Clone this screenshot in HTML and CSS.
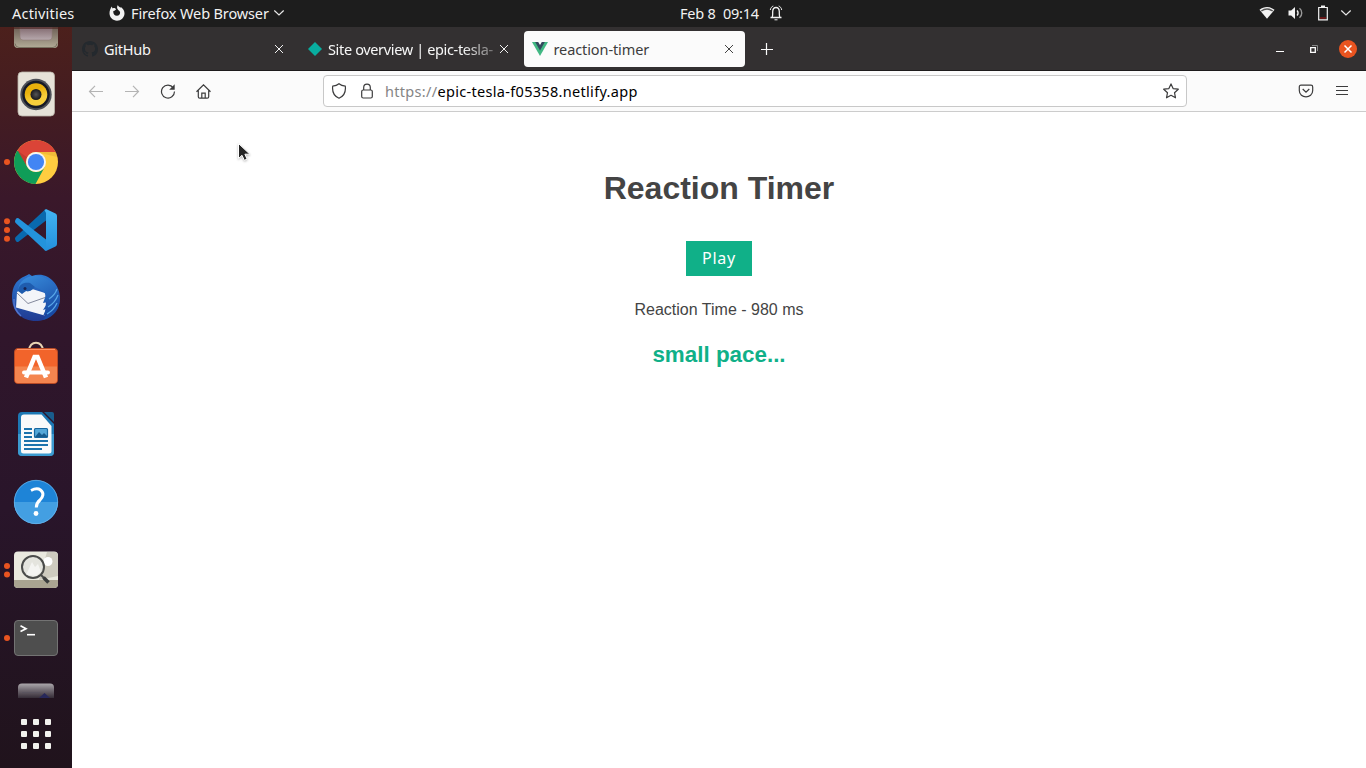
FILE: index.html
```html
<!DOCTYPE html>
<html lang="en">
<head>
<meta charset="utf-8">
<title>reaction-timer</title>
<link rel="stylesheet" href="styles.css">
</head>
<body>
<header class="topbar">
  <div class="topbar-left">
    <span class="t t-activities">Activities</span>
    <svg class="ff" width="16" height="16" viewBox="0 0 16 16"><path d="M2.6 1.6 3.7 3.6C4.4 2.9 5.3 3 6 3.2L7.2 4.3 5.5 5.8 4.3 6C4 9 5.5 10.8 8 10.8c2 0 3.2-1.6 3.1-3.2C11 6.2 10 5.4 9.2 4.9 7.7 3.7 7.8 1.5 8.9.1c.4 1.5 1.4 1.8 2.5 2.700l.5-.8c2.400 1.700 3.700 4 3.600 6.500C15.400 12.600 12 15.700 8 15.700S.5 12.500.5 8.300C.5 5.500 1.700 3.500 2.600 1.600z" fill="#f2f2f2"/></svg>
    <span class="t t-app">Firefox Web Browser</span>
    <svg class="chev" width="12" height="8" viewBox="0 0 12 8"><path d="M1.300 1.500 6 6l4.700-4.500" fill="none" stroke="#e8e8e8" stroke-width="1.200"/></svg>
  </div>
  <div class="topbar-clock">
    <span class="t t-date">Feb 8</span><span class="t t-time">09:14</span>
    <svg width="14" height="16" viewBox="0 0 14 16" fill="none" stroke="#f2f2f2"><path d="M1.500 12.500h11M3 12.500C4 11 3.600 9 3.700 6.500 3.800 4 5 2.500 7 2.500S10.200 4 10.300 6.500C10.400 9 10 11 11 12.500" stroke-width="1.300"/><path d="M5.500 14.800h3M4.300 1C2.800 1.500 1.500 3 1.300 5M9.700 1c1.500.5 2.800 2 3 4"/></svg>
  </div>
  <div class="topbar-status">
    <svg width="16" height="14" viewBox="0 0 16 14"><path d="M.5 3.800C5 .2 11 .2 15.500 3.800L8 12.800z" fill="#f2f2f2"/><path d="M2.300 5C5.700 2.700 10.300 2.700 13.700 5" fill="none" stroke="#555" stroke-width="1.500"/></svg>
    <svg width="16" height="14" viewBox="0 0 16 14"><path d="M.5 4.500h2.700L7 1v12L3.200 9.500H.5z" fill="#f2f2f2"/><path d="M9 4.500c1.400 1.300 1.400 3.700 0 5" fill="none" stroke="#f2f2f2" stroke-width="1.400"/><path d="M11.500 2.300c3 2.400 3 7 0 9.400" fill="none" stroke="#999" stroke-width="1.400"/></svg>
    <svg class="battery" width="12" height="16" viewBox="0 0 12 16"><path d="M1.700 2.500h8.600v12.300H1.700z" fill="none" stroke="#f2f2f2" stroke-width="1.200"/><path d="M4 .5h4v2H4z" fill="#f2f2f2"/><path d="M3 13h6" stroke="#b01010" stroke-width="1"/></svg>
    <svg width="12" height="8" viewBox="0 0 12 8"><path d="M1.300 1.500 6 6l4.700-4.500" fill="none" stroke="#e8e8e8" stroke-width="1.200"/></svg>
  </div>
</header>
<div class="desktop">
  <nav class="dock">
    <div class="dock-items">
      <svg viewBox="0 0 72 68" class="first"><defs>
        <linearGradient id="g1" x2="0" y2="1"><stop offset=".5" stop-color="#685950"/><stop offset="1" stop-color="#b3ad98"/></linearGradient>
        <linearGradient id="g2" x2="0" y2="1"><stop offset=".4" stop-color="#6b4f55"/><stop offset="1" stop-color="#b7a9ad"/></linearGradient></defs>
        <rect x="14" y="12" width="44" height="44" rx="4" fill="url(#g1)"/><path d="M15 51.500q.5 4 4 4h34q3.500 0 4-4" fill="none" stroke="#77705f"/><rect x="20" y="18" width="32" height="30" rx="3" fill="url(#g2)" stroke="#8d7a76" stroke-width=".6"/><path d="M14 34h44v3H14z" fill="#4a1f1c" opacity=".6"/></svg>
      <svg viewBox="0 0 72 68"><defs><linearGradient id="g3" x1=".3" x2=".7" y2="1"><stop offset=".3" stop-color="#e9b10c"/><stop offset=".7" stop-color="#f7cf3c"/></linearGradient><radialGradient id="g4"><stop offset="0" stop-color="#555"/><stop offset="1" stop-color="#18191d"/></radialGradient></defs>
        <rect x="18" y="12" width="36.500" height="44" rx="4" fill="#e6e2d8" stroke="#b9b4a8" stroke-width=".8"/><circle cx="36" cy="34.500" r="15.700" fill="#4e5057"/><circle cx="36" cy="34.500" r="13.700" fill="#171a26"/><circle cx="36" cy="34.500" r="11.300" fill="url(#g3)"/><circle cx="36" cy="34.500" r="5.500" fill="url(#g4)"/></svg>
      <svg viewBox="0 0 72 68"><circle class="dot" cx="7" cy="34" r="3"/>
        <circle cx="36" cy="34" r="22" fill="#ffcd40"/><path d="M17 23A22 22 0 0 1 55.700 24H36A10 10 0 0 0 27.300 39z" fill="#db4437"/><path d="M17 23A22 22 0 0 0 35.500 56L44.700 39A10 10 0 0 1 27.300 39L18 23z" fill="#0f9d58"/><path d="M36 24h19.700q1 2 1.500 5z" fill="#c98a22" opacity=".25"/><path d="M18 23 27 39l1-9z" fill="#7a241c" opacity=".25"/><circle cx="36" cy="34" r="10" fill="#f5f5f5"/><circle cx="36" cy="34" r="8.100" fill="#4285f4"/></svg>
      <svg viewBox="0 0 72 68"><defs><linearGradient id="g5" x2="0" y2="1"><stop offset="0" stop-color="#42b4f3"/><stop offset="1" stop-color="#2490dc"/></linearGradient></defs><circle class="dot" cx="7" cy="25.300" r="3"/><circle class="dot" cx="7" cy="34" r="3"/><circle class="dot" cx="7" cy="42.700" r="3"/>
        <path d="M15 42.500q0-.8.700-1.400L44 14.500q1-1.500 3.500-.5L46 24.500 18.500 45.800q-1 .6-2 0L15.300 44z" fill="#0969ae"/><path d="M15 25.500q0 .8.700 1.400L44 53.500q1 1.500 3.500.5L46 43.500 18.500 22.200q-1-.6-2 0L15.300 24z" fill="#2393dc"/><path d="M44.500 54c1 .9 1.700 1 2.500.6l8.500-4q1.500-.8 1.500-2.500V20q0-1.700-1.500-2.500l-8.500-4c-.8-.4-1.500-.3-2.500.5L46 17v34z" fill="url(#g5)"/></svg>
      <svg viewBox="0 0 72 68"><defs><linearGradient id="g6" x2="0" y2="1"><stop offset="0" stop-color="#2c78d2"/><stop offset="1" stop-color="#203a91"/></linearGradient><linearGradient id="g6b" x2=".5" y2="1"><stop offset="0" stop-color="#3a8fde"/><stop offset="1" stop-color="#184ba5"/></linearGradient></defs>
        <path d="M12 34C12 26 14 19 20 15c4-3 6-3 9-5l3 2C47 7 59 19 60 33c.5 13-10 23-22 24C23 58 12 48 12 34z" fill="url(#g6)"/>
        <path d="M14 35q-1 10 7 17" fill="none" stroke="#5175ce" stroke-width="1.500"/>
        <path d="M17 28q5-4 12-4l16 5q2 9-.5 22.500L16 43.500z" fill="#f3f5f9"/><path d="M17 29 28 39.500 45 33.500" fill="none" stroke="#777d91" stroke-width=".9"/>
        <path d="M18 27C18 14 34 8 45 14c12 6 18 20 13 30-3 6-8 10-15 12l5-7-5 3 3-7-3 1 5-8-5 1 3-8C43 26 39 25 35 23q-4 5-9 4l-4 1z" fill="url(#g6b)"/>
        <path d="M18 27c1-7 6-9 12-8l5 4q-4 5-9 4l-4 3z" fill="#1f5cae"/><circle cx="25" cy="24.500" r="1.500" fill="#172455"/>
        <path d="M49 35q6-4 8-10M48 43q7-4 10-12M47 50q7-4 10-11" fill="none" stroke="#59a7e8" stroke-width="1.200"/></svg>
      <svg viewBox="0 0 72 68"><path d="M29 19C29 8 43 8 43 19" fill="none" stroke="#e9d5b4" stroke-width="2"/><rect x="14.500" y="16.500" width="43" height="35" rx="3.500" fill="#f2642b" stroke="#b84a25"/><path d="M15 34.500h42V48q0 3-3 3H18q-3 0-3-3z" fill="#f4854f"/><path d="M17 17.500h38" stroke="#ff9466"/><g fill="none" stroke="#fff" stroke-width="4.500"><path d="m26 45.500 8.500-20.500h3L46 45.500"/><path d="M24 40.500h24" stroke-linecap="round" stroke-width="4"/></g></svg>
      <svg viewBox="0 0 72 68"><path d="M22 12h20l12 12v28q0 4-4 4H22q-4 0-4-4V16q0-4 4-4z" fill="#1d78b4"/><path d="M18 34h36v18q0 4-4 4H22q-4 0-4-4z" fill="#3c9bd0"/><path d="M44 12h8q2 0 2 2v8z" fill="#195d8d"/><path d="M24 14.500h17.500L51.500 26v25q0 2.500-2.500 2.500H23.500q-2.500 0-2.500-2.500V17.500q0-3 3-3z" fill="#fafafa"/><g stroke="#1d73ac" stroke-width="2"><path d="M24 29h8M24 33h8M24 37h8M24 41h24M24 45h24M24 49h18"/></g><rect x="34.500" y="28.500" width="13" height="9" rx="1" fill="#54a7d8" stroke="#1767a0" stroke-width="1.200"/><path d="m35 37 4-5 3 3 2-2 4 4z" fill="#165b8e"/></svg>
      <svg viewBox="0 0 72 68"><circle cx="36" cy="34" r="22" fill="#1e84d7"/><path d="M14 34a22 22 0 0 0 44 0z" fill="#439fe2"/><circle cx="36" cy="34" r="21.700" fill="none" stroke="#71b9ec" stroke-width=".7"/><path d="M31 22.500q6-3 9.500-.5c4 3 2.500 7-.5 10-3 2.500-3.700 4-3.700 7.500" fill="none" stroke="#fff" stroke-width="3"/><circle cx="36" cy="45.500" r="2.400" fill="#fff"/></svg>
      <svg viewBox="0 0 72 68"><circle class="dot" cx="7" cy="30" r="3"/><circle class="dot" cx="7" cy="38.500" r="3"/><rect x="14" y="15.500" width="44" height="36.500" rx="4" fill="#eae9df"/><path d="M47 16h7q4 0 4 4v20L39 44z" fill="#cecbbf"/><path d="M14 44h44v4q0 4-4 4H18q-4 0-4-4z" fill="#aaa491"/><circle cx="48" cy="25.500" r="4.500" fill="#fff"/><circle cx="33" cy="31" r="11" fill="#e3e3de" fill-opacity=".9" stroke="#4b4c4b" stroke-width="2"/><path d="m26 39 6-13 3 5 3-3 3 8-5 4z" fill="#fff" opacity=".6"/><path d="m41 39 3 3" stroke="#4b4c4b" stroke-width="2"/><path d="m43.500 41.500 5 5" stroke="#3b3d3d" stroke-width="3.500"/></svg>
      <svg viewBox="0 0 72 68"><circle class="dot" cx="7" cy="34" r="3"/><rect x="14.500" y="16.500" width="43" height="35" rx="3.500" fill="#4e4e4e" stroke="#737373"/><path d="m20.500 21.800 5.500 2.900-5.500 2.900" fill="none" stroke="#fff" stroke-width="1.700"/><path d="M27 30.700h8" stroke="#fff" stroke-width="1.600"/></svg>
      <svg viewBox="0 0 72 68"><defs><linearGradient id="g7" gradientUnits="userSpaceOnUse" x1="0" x2="0" y1="11" y2="27"><stop offset="0" stop-color="#b0acb0"/><stop offset=".4" stop-color="#777078"/><stop offset="1" stop-color="#2e2530"/></linearGradient></defs><rect x="18" y="11.500" width="36" height="44" rx="4" fill="url(#g7)"/><path d="m39 26 5.500-5 5.500 5z" fill="#28285a"/><path d="M22 20.500h18" stroke="#5b5560"/></svg>
    </div>
    <div class="apps-grid"><i></i><i></i><i></i><i></i><i></i><i></i><i></i><i></i><i></i></div>
  </nav>
  <section class="browser">
    <div class="tabs">
      <div class="tab">
        <svg class="fav" width="16" height="16" viewBox="0 0 16 16"><path fill="#24292e" d="M8 0C3.580 0 0 3.580 0 8c0 3.540 2.290 6.530 5.470 7.590.4.070.55-.17.55-.38 0-.19-.01-.82-.01-1.490-2.010.37-2.530-.49-2.690-.94-.09-.23-.48-.94-.82-1.130-.28-.15-.68-.52-.01-.53.63-.01 1.080.58 1.230.82.720 1.210 1.870.87 2.330.66.070-.52.280-.87.510-1.070-1.780-.2-3.640-.89-3.640-3.950 0-.87.310-1.590.82-2.150-.08-.2-.36-1.020.08-2.120 0 0 .67-.21 2.200.82a7.600 7.600 0 0 1 4 0c1.530-1.040 2.200-.82 2.200-.82.440 1.100.160 1.920.080 2.120.510.560.820 1.270.820 2.150 0 3.070-1.870 3.750-3.650 3.950.290.250.540.730.540 1.480 0 1.070-.01 1.930-.01 2.200 0 .210.150.460.550.380A8 8 0 0 0 16 8c0-4.420-3.580-8-8-8z"/></svg>
        <span class="label"><span class="t t-github">GitHub</span></span>
        <svg class="x" width="10" height="10" viewBox="0 0 10 10"><path d="m1 1 8 8m0-8-8 8"/></svg>
      </div>
      <div class="tab">
        <svg class="fav" width="16" height="16" viewBox="0 0 16 16"><path fill="#08ad9f" d="m8 1 7 7-7 7-7-7z"/></svg>
        <span class="label fade"><span class="t t-site">Site overview | epic-tesla-</span></span>
        <svg class="x" width="10" height="10" viewBox="0 0 10 10"><path d="m1 1 8 8m0-8-8 8"/></svg>
      </div>
      <div class="tab active">
        <svg class="fav" width="16" height="16" viewBox="0 0 16 16"><path fill="#41b883" d="M0 1h16L8 15z"/><path fill="#34495e" d="M3.200 1h9.600L8 9.500z"/><path fill="#fbfbfb" d="M6.200 1h3.600L8 4z"/></svg>
        <span class="label"><span class="t t-react">reaction-timer</span></span>
        <svg class="x" width="10" height="10" viewBox="0 0 10 10"><path d="m1 1 8 8m0-8-8 8"/></svg>
      </div>
      <svg class="plus" width="12" height="12" viewBox="0 0 12 12"><path d="M5.500 0v12M0 6.500h12" stroke="#fbfbfb" stroke-width="1.200"/></svg>
      <div class="window-buttons">
        <svg width="10" height="10" viewBox="0 0 10 10"><path d="M1 7.500h8" stroke="#fff"/></svg>
        <svg width="10" height="10" viewBox="0 0 10 10" fill="none"><path d="M1.700 3.700h4.600v4.600H1.700z" stroke="#fff" stroke-width="1.300"/><path d="M3 1.500h5.500V7" stroke="#888"/></svg>
        <svg width="18" height="18" viewBox="0 0 18 18"><circle cx="9" cy="9" r="9" fill="#e95420"/><path d="m5.500 5.500 7 7m0-7-7 7" stroke="#fff" stroke-width="1.500"/></svg>
      </div>
    </div>
    <div class="toolbar">
      <div class="nav-buttons">
        <svg class="off" viewBox="0 0 16 16"><path d="M15 8.500H1.500M7 2.800 1.500 8.500 7 14.200"/></svg>
        <svg class="off" viewBox="0 0 16 16"><path d="M1 8.500h13.500M9 2.800l5.500 5.700L9 14.200"/></svg>
        <svg viewBox="0 0 16 16"><path d="M13.300 4.800A6.500 6.500 0 1 0 14.500 8.500"/><path d="M14.700 1.300v5.500H9.200z" fill="#3c3c3d" stroke="none"/></svg>
        <svg viewBox="0 0 16 16"><path d="M.5 8.700l7-6.900 7 6.900M2.300 7.500v6.200q0 1.500 1.500 1.500h7.400q1.500 0 1.500-1.500V7.500M5.800 15v-4.800h3.400V15"/></svg>
      </div>
      <div class="urlbar">
        <svg viewBox="0 0 16 16"><path d="M8 .8Q10.500 3 14.300 3.200C15 9 12.500 13.300 8 15.200 3.500 13.300 1 9 1.700 3.200Q5.500 3 8 .8z"/></svg>
        <svg viewBox="0 0 16 16"><rect x="2.700" y="7" width="10.600" height="8" rx="1.500"/><path d="M4.700 7V4.500C4.700-.1 11.300-.1 11.300 4.500V7"/></svg>
        <span class="t t-url"><span class="scheme">https://</span><span class="host">epic-tesla-f05358.netlify.app</span></span>
        <svg class="star" viewBox="0 0 16 16"><path d="m8 .9 2.100 4.700 5.200.6-3.800 3.500 1 5.100L8 12.300l-4.500 2.500 1-5.100L.7 6.200l5.200-.6z" stroke-linejoin="round"/></svg>
      </div>
      <div class="tools">
        <svg viewBox="0 0 16 16"><path d="M3 2.200h10q1.700 0 1.700 1.700v3.600c0 8.500-13.400 8.500-13.400 0V3.900Q1.300 2.200 3 2.200zM4.700 6 8 9.200 11.300 6"/></svg>
        <svg viewBox="0 0 16 16"><path d="M2 3.500h12M2 7.500h12M2 11.500h12"/></svg>
      </div>
    </div>
    <main class="page">
      <h1 class="t">Reaction Timer</h1>
      <button type="button"><span class="t t-play">Play</span></button>
      <p class="t">Reaction Time - 980 ms</p>
      <h2 class="t">small pace...</h2>
    </main>
  </section>
</div>
<svg class="cursor" width="14" height="21" viewBox="0 0 14 21"><path d="M1.500 1.500v15l3.500-3.200 2.300 5 2.800-1.200-2.200-4.900h5z" fill="#252525" stroke="#fff"/></svg>
</body>
</html>
```
FILE: styles.css
```css
* { box-sizing: border-box; }
body { margin: 0; width: 1366px; height: 768px; overflow: hidden; display: flex; flex-direction: column; background: #fff; font: 14.5px/20px "Noto Sans", "Open Sans", sans-serif; }
svg { display: block; flex: none; }
.t { white-space: nowrap; }

.topbar { height: 27px; flex: none; display: grid; grid-template-columns: 1fr auto 1fr; align-items: center; padding-bottom: 2px; background: #1d1d1d; color: #f2f2f2; }
.topbar-left, .topbar-clock, .topbar-status { display: flex; align-items: center; }
.topbar-left { padding-left: 12px; }
.t-activities { width: 97px; letter-spacing: .2px; }
.t-app { width: 138px; margin-left: 6px; letter-spacing: -.13px; }
.chev { margin-left: 4px; }
.topbar-clock { margin-left: 97px; }
.t-date { width: 43px; letter-spacing: -.2px; }
.t-time { width: 46px; letter-spacing: -.25px; }
.topbar-status { justify-content: flex-end; gap: 12px; padding-right: 14px; }
.battery { margin-left: 1px; margin-right: -1px; }
.topbar-status svg:first-child { margin-right: 1px; }

.desktop { flex: 1; min-height: 0; display: flex; }
.dock { width: 72px; flex: none; display: flex; flex-direction: column; background: linear-gradient(#4c201c 0, #451d20 9%, #3a182a 23%, #30162b 42%, #29152a 65%, #241423 82%, #20131c); }
.dock-items { height: 671px; overflow: hidden; }
.dock-items svg { width: 72px; height: 68px; }
.dock-items .first { margin-top: -35px; }
.dot { fill: #e95420; }
.apps-grid { display: grid; grid-template-columns: repeat(3, 6px); gap: 6px; justify-content: center; padding-top: 21px; }
.apps-grid i { width: 6px; height: 6px; background: #f2f2ee; border-radius: 1px; }

.browser { flex: 1; min-width: 0; display: flex; flex-direction: column; }
.tabs { height: 44px; flex: none; display: flex; align-items: center; gap: 4px; padding: 0 9px 0 2px; background: #333031; border-bottom: 1px solid #1d1b1c; color: #f7f7f7; }
.tab { width: 221px; height: 36px; display: flex; align-items: center; padding: 0 11px 0 8px; border-radius: 4px; }
.label { flex: 1; min-width: 0; margin-left: 5px; white-space: nowrap; }
.t-github { margin-left: 1px; letter-spacing: -.25px; }
.t-site { letter-spacing: -.35px; }
.t-react { margin-left: .5px; letter-spacing: -.1px; }
.fade { -webkit-mask-image: linear-gradient(90deg, #000 80%, #0004 100%); mask-image: linear-gradient(90deg, #000 80%, #0004 100%); }
.x { margin-left: 3px; stroke: #f1f1f1; stroke-width: 1; }
.active { background: #fbfbfb; color: #3d3d3d; }
.active .x { stroke: #444; }
.plus { margin-left: 12px; }
.window-buttons { margin-left: auto; display: flex; align-items: center; gap: 24px; }
.window-buttons svg:last-child { margin-left: -4px; }

.toolbar { height: 41px; flex: none; display: flex; align-items: center; background: #fbfbfb; border-bottom: 1px solid #ccc; }
.toolbar svg { width: 16px; height: 16px; fill: none; stroke: #3c3c3d; stroke-width: 1.2; }
.nav-buttons { width: 251px; display: flex; gap: 20px; padding-left: 16px; }
.nav-buttons .off { stroke: #b4b4b4; }
.urlbar { width: 864px; height: 32px; display: flex; align-items: center; padding: 0 7px; border: 1px solid #c8c8c8; border-radius: 4px; background: #fff; }
.urlbar svg + svg { margin-left: 12px; }
.urlbar .star { margin-left: auto; }
.t-url { margin-left: 10px; color: #000; letter-spacing: .31px; }
.scheme { color: #858585; }
.tools { display: flex; gap: 20px; margin-left: 111px; }

.page { flex: 1; display: flex; flex-direction: column; align-items: center; padding-top: 58px; color: #444; font-family: "Liberation Sans", Arial, sans-serif; }
h1 { margin: 0; font-size: 32px; line-height: 37px; }
button { width: 66px; height: 35px; margin: 34px 0 0; padding: 0; border: 0; background: #10b088; color: #fff; font: 16px/35px "Noto Sans", sans-serif; letter-spacing: .8px; }
p { margin: 25px 0 0; font-size: 16px; line-height: 18px; }
h2 { margin: 23px 0 0; font-size: 22.4px; line-height: 26px; color: #10b088; }
.cursor { position: absolute; left: 237px; top: 142px; filter: drop-shadow(0 1px 1px #0004); }
```
